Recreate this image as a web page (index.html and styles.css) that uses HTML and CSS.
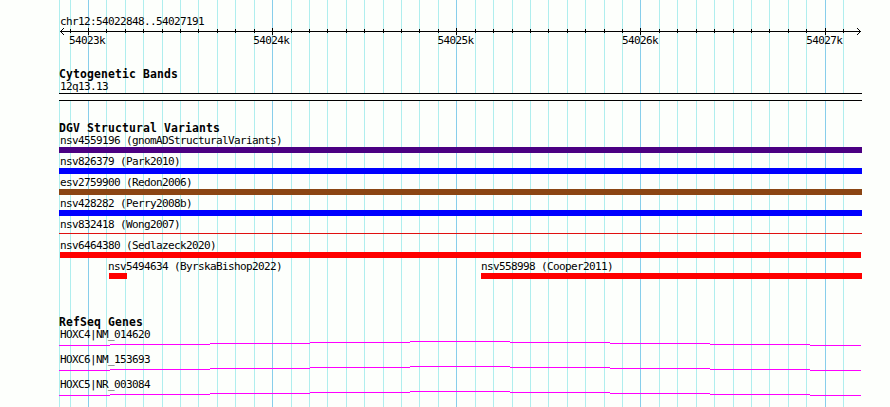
FILE: index.html
```
<!DOCTYPE html>
<html lang="en">
<head>
  <meta charset="UTF-8">
  <meta name="viewport" content="width=device-width, initial-scale=1.0">
  <title>chr12:54022848..54027191</title>
  <link rel="stylesheet" href="styles.css">
</head>
<body>
  <div class="browser">
    <svg class="grid" width="803" height="407" shape-rendering="crispEdges">
      <path class="minor" id="minor"/>
      <path class="major" id="major"/>
    </svg>

    <div class="ruler">
      <p class="label">chr12:54022848..54027191</p>
      <svg class="axis" width="803" height="7" shape-rendering="crispEdges">
        <path id="ticks"/>
        <path d="M1 3.5H802"/>
        <path d="M2 2.5h1M3 1.5h1M4 0.5h1M2 4.5h1M3 5.5h1M4 6.5h1"/>
        <path d="M800 2.5h1M799 1.5h1M798 0.5h1M800 4.5h1M799 5.5h1M798 6.5h1"/>
      </svg>
      <div class="scale">
        <p class="label">54023k</p>
        <p class="label">54024k</p>
        <p class="label">54025k</p>
        <p class="label">54026k</p>
        <p class="label">54027k</p>
      </div>
    </div>

    <div class="track cyto">
      <h2>Cytogenetic Bands</h2>
      <p class="label">12q13.13</p>
      <div class="band"></div>
    </div>

    <div class="track variants">
      <h2>DGV Structural Variants</h2>
      <div class="row">
        <p class="label">nsv4559196 (gnomADStructuralVariants)</p>
        <div class="bar purple"></div>
      </div>
      <div class="row">
        <p class="label">nsv826379 (Park2010)</p>
        <div class="bar blue"></div>
      </div>
      <div class="row">
        <p class="label">esv2759900 (Redon2006)</p>
        <div class="bar brown"></div>
      </div>
      <div class="row">
        <p class="label">nsv428282 (Perry2008b)</p>
        <div class="bar blue"></div>
      </div>
      <div class="row">
        <p class="label">nsv832418 (Wong2007)</p>
        <div class="bar thin"></div>
      </div>
      <div class="row">
        <p class="label">nsv6464380 (Sedlazeck2020)</p>
        <div class="bar red inner"></div>
      </div>
      <div class="row pair">
        <div class="first">
          <p class="label">nsv5494634 (ByrskaBishop2022)</p>
          <div class="bar red short"></div>
        </div>
        <div class="second">
          <p class="label">nsv558998 (Cooper2011)</p>
          <div class="bar red"></div>
        </div>
      </div>
    </div>

    <div class="track genes">
      <h2>RefSeq Genes</h2>
      <div class="gene">
        <p class="label">HOXC4|NM_014620</p>
        <svg class="intron" width="803" height="5" shape-rendering="crispEdges">
          <path d="M0 4.5H51M51 3.5H151M151 2.5H251M251 1.5H351M351 0.5H451M451 1.5H551M551 2.5H651M651 3.5H751M751 4.5H802"/>
        </svg>
      </div>
      <div class="gene">
        <p class="label">HOXC6|NM_153693</p>
        <svg class="intron" width="803" height="5" shape-rendering="crispEdges">
          <path d="M0 4.5H51M51 3.5H151M151 2.5H251M251 1.5H351M351 0.5H451M451 1.5H551M551 2.5H651M651 3.5H751M751 4.5H802"/>
        </svg>
      </div>
      <div class="gene">
        <p class="label">HOXC5|NR_003084</p>
        <svg class="intron" width="803" height="5" shape-rendering="crispEdges">
          <path d="M0 4.5H51M51 3.5H151M151 2.5H251M251 1.5H351M351 0.5H451M451 1.5H551M551 2.5H651M651 3.5H751M751 4.5H802"/>
        </svg>
      </div>
    </div>
  </div>
  <script>
    // one line per 100 bp, every tenth one is major
    var lines = [
      11, 29, 47, 66, 84, 103, 121, 139, 158, 176, 195,
      213, 232, 250, 268, 287, 305, 324, 342, 360, 379,
      397, 416, 434, 453, 471, 489, 508, 526, 545, 563,
      581, 600, 618, 637, 655, 674, 692, 710, 729, 747,
      766, 784
    ];
    var minor = 'M0.5 0V407', major = '', ticks = '';
    for (var i = 0; i < lines.length; i++) {
      var x = lines[i] + 0.5;
      if (i % 10 == 1) {
        major += 'M' + x + ' 0V407';
        ticks += 'M' + x + ' 0V7';
      } else {
        minor += 'M' + x + ' 0V407';
        ticks += 'M' + x + ' 1V5';
      }
    }
    document.getElementById('minor').setAttribute('d', minor);
    document.getElementById('major').setAttribute('d', major);
    document.getElementById('ticks').setAttribute('d', ticks);
  </script>
</body>
</html>
```
FILE: styles.css
```
* {
  padding: 0;
  margin: 0;
}
body {
  background: #fdfffc;
  color: #000;
  font-family: "DejaVu Sans Mono", "Liberation Mono", monospace;
  overflow: hidden;
}
svg {
  display: block;
  fill: none;
}
.browser {
  position: relative;
  width: 803px;
  height: 407px;
  margin-left: 59px;
}
.grid {
  position: absolute;
  top: 0;
  left: 0;
  z-index: -1;
}
.grid .minor {
  stroke: #afeeee;
}
.grid .major {
  stroke: #87ceeb;
}
.label {
  height: 12px;
  padding-left: 1px;
  font-size: 11px;
  line-height: 14px;
  letter-spacing: -0.622px;
  white-space: nowrap;
}
h2 {
  height: 12px;
  font-size: 11.4px;
  line-height: 12px;
  letter-spacing: 0.137px;
  white-space: nowrap;
}

.ruler {
  height: 68px;
  padding-top: 15px;
  box-sizing: border-box;
}
.axis {
  margin-top: 1px;
  stroke: #000;
}
.scale {
  display: flex;
  gap: 148px;
  padding-left: 9px;
}
.scale .label {
  width: 35.3px;
  line-height: 12px;
}

.cyto {
  height: 54px;
}
.band {
  height: 6px;
  margin-top: 1px;
  border-top: 1px solid #000;
  border-bottom: 1px solid #000;
  background: #fdfffc;
}

.variants {
  height: 194px;
}
.row {
  height: 21px;
}
.bar {
  height: 6px;
  margin-top: 1px;
}
.purple {
  background: #4b0082;
}
.blue {
  background: #0000ff;
}
.brown {
  background: #8b4513;
}
.red {
  background: #ff0000;
}
.thin {
  height: 1px;
  margin-top: 3px;
  background: #e01010;
}
.inner {
  margin-left: 1px;
  margin-right: 1px;
}
.pair {
  display: flex;
}
.first {
  width: 373px;
  padding-left: 49px;
}
.first .label,
.second .label {
  padding-left: 0;
}
.second {
  flex: 1;
}
.short {
  width: 18px;
  margin-left: 1px;
}

.gene {
  height: 25px;
}
.intron {
  margin-top: 1px;
  stroke: #ff00ff;
}
```
